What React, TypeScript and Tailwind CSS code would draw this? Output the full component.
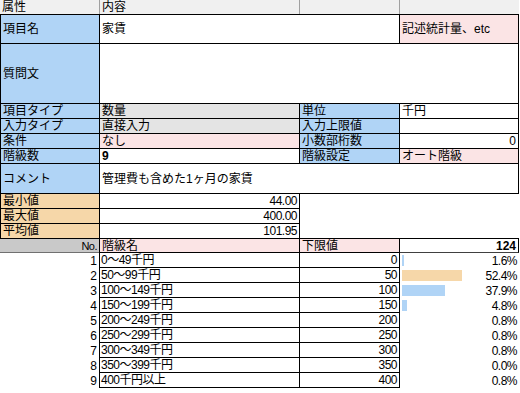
import React from "react";

const BLUE = "bg-[#b0d4f6]";
const PINK = "bg-[#fbe4e5]";
const ORANGE = "bg-[#f6d7a9]";
const GRAY = "bg-[#e4e4e4]";

const classes: [number, string, number, number, number][] = [
  [1, "0～49千円", 0, 1.6, 2],
  [2, "50～99千円", 50, 52.4, 60],
  [3, "100～149千円", 100, 37.9, 43],
  [4, "150～199千円", 150, 4.8, 5],
  [5, "200～249千円", 200, 0.8, 0],
  [6, "250～299千円", 250, 0.8, 0],
  [7, "300～349千円", 300, 0.8, 0],
  [8, "350～399千円", 350, 0.0, 0],
  [9, "400千円以上", 400, 0.8, 0],
];

const maxPct = Math.max(...classes.map((c) => c[3]));

export default function App() {
  return (
    <div className="w-[520px] h-[393px] bg-white text-black text-[12px] leading-[14px] font-['Liberation_Sans','Noto_Sans_CJK_JP',sans-serif] overflow-hidden">
      {/* column header */}
      <div className="flex h-[15px] bg-[#f0f0f0] border-b border-black w-[519px]">
        <div className="w-[100px] border-r border-[#a0a0a0] pl-[2px] flex items-center">属性</div>
        <div className="w-[200px] border-r border-[#a0a0a0] pl-[2px] flex items-center">内容</div>
        <div className="w-[100px] border-r border-[#a0a0a0]"></div>
        <div className="w-[119px]"></div>
      </div>

      {/* 項目名 */}
      <div className="flex h-[29px]">
        <div className={`w-[100px] border-l border-r border-b border-black ${BLUE} pl-[2px] flex items-center`}>項目名</div>
        <div className="w-[300px] border-r border-b border-black pl-[2px] flex items-center">家賃</div>
        <div className={`w-[119px] border-r border-b border-black ${PINK} pl-[2px] flex items-center`}>記述統計量、etc</div>
      </div>

      {/* 質問文 */}
      <div className="flex h-[60px]">
        <div className={`w-[100px] border-l border-r border-b border-black ${BLUE} pl-[2px] flex items-center`}>質問文</div>
        <div className="w-[419px] border-r border-b border-black"></div>
      </div>

      {/* 項目タイプ */}
      <div className="flex h-[15px]">
        <div className={`w-[100px] border-l border-r border-b border-black ${BLUE} pl-[2px] flex items-center`}>項目タイプ</div>
        <div className={`w-[200px] border-r border-b border-black ${GRAY} pl-[2px] flex items-center`}>数量</div>
        <div className={`w-[100px] border-r border-b border-black ${BLUE} pl-[2px] flex items-center`}>単位</div>
        <div className="w-[119px] border-r border-b border-black pl-[2px] flex items-center">千円</div>
      </div>

      {/* 入力タイプ */}
      <div className="flex h-[15px]">
        <div className={`w-[100px] border-l border-r border-b border-black ${BLUE} pl-[2px] flex items-center`}>入力タイプ</div>
        <div className={`w-[200px] border-r border-b border-black ${GRAY} pl-[2px] flex items-center`}>直接入力</div>
        <div className={`w-[100px] border-r border-b border-black ${BLUE} pl-[2px] flex items-center`}>入力上限値</div>
        <div className="w-[119px] border-r border-b border-black"></div>
      </div>

      {/* 条件 */}
      <div className="flex h-[15px]">
        <div className={`w-[100px] border-l border-r border-b border-black ${BLUE} pl-[2px] flex items-center`}>条件</div>
        <div className={`w-[200px] border-r border-b border-black ${PINK} pl-[2px] flex items-center`}>なし</div>
        <div className={`w-[100px] border-r border-b border-black ${BLUE} pl-[2px] flex items-center`}>小数部桁数</div>
        <div className="w-[119px] border-r border-b border-black pr-[2px] flex items-center justify-end">0</div>
      </div>

      {/* 階級数 */}
      <div className="flex h-[15px]">
        <div className={`w-[100px] border-l border-r border-b border-black ${BLUE} pl-[2px] flex items-center`}>階級数</div>
        <div className="w-[200px] border-r border-b border-black pl-[2px] flex items-center font-bold">9</div>
        <div className={`w-[100px] border-r border-b border-black ${BLUE} pl-[2px] flex items-center`}>階級設定</div>
        <div className={`w-[119px] border-r border-b border-black ${PINK} pl-[2px] flex items-center`}>オート階級</div>
      </div>

      {/* コメント */}
      <div className="flex h-[30px]">
        <div className={`w-[100px] border-l border-r border-b border-black ${BLUE} pl-[2px] flex items-center`}>コメント</div>
        <div className="w-[419px] border-r border-b border-black pl-[2px] flex items-center">管理費も含めた1ヶ月の家賃</div>
      </div>

      {/* stats */}
      {[
        ["最小値", "44.00"],
        ["最大値", "400.00"],
        ["平均値", "101.95"],
      ].map(([label, val], i) => (
        <div key={label} className="flex h-[15px]">
          <div className={`w-[100px] border-l border-r border-b border-black ${ORANGE} pl-[2px] flex items-center`}>{label}</div>
          <div className="w-[200px] border-r border-b border-black pr-[2px] flex items-center justify-end tracking-[-0.5px]">{val}</div>
          {i === 2 ? <div className="w-[219px] border-b border-black"></div> : null}
        </div>
      ))}

      {/* class table header */}
      <div className="flex h-[14px]">
        <div className="w-[99px] bg-[#c9c9c9] border-b border-[#707070] pr-[2px] flex items-center justify-end text-[11px] tracking-[-0.5px]">No.</div>
        <div className={`w-[201px] border-l border-r border-b border-black ${PINK} pl-[2px] flex items-center`}>階級名</div>
        <div className={`w-[100px] border-r border-b border-black ${PINK} pl-[2px] flex items-center`}>下限値</div>
        <div className="w-[119px] border-r border-b border-[#404040] border-r-black pr-[2px] flex items-center justify-end font-bold">124</div>
      </div>

      {classes.map(([no, name, lower, pct, w]) => {
        const isMax = pct === maxPct;
        return (
          <div key={no} className="flex h-[15px]">
            <div className="w-[99px] pr-[2px] flex items-center justify-end">{no}</div>
            <div className="w-[201px] border-l border-r border-b border-black pl-[1px] flex items-center tracking-[-0.5px]">{name}</div>
            <div className="w-[100px] border-r border-b border-black pr-[2px] flex items-center justify-end tracking-[-0.5px]">{lower}</div>
            <div className="w-[119px] flex items-center pl-[2px] pr-[2px]">
              <div
                className={`h-[11px] shrink-0 ${isMax ? "bg-[#f6d7a9]" : "bg-[#b0d4f6]"}`}
                style={{ width: `${w}px` }}
              ></div>
              <div className="ml-auto tracking-[-0.5px]">{pct.toFixed(1)}%</div>
            </div>
          </div>
        );
      })}
    </div>
  );
}
